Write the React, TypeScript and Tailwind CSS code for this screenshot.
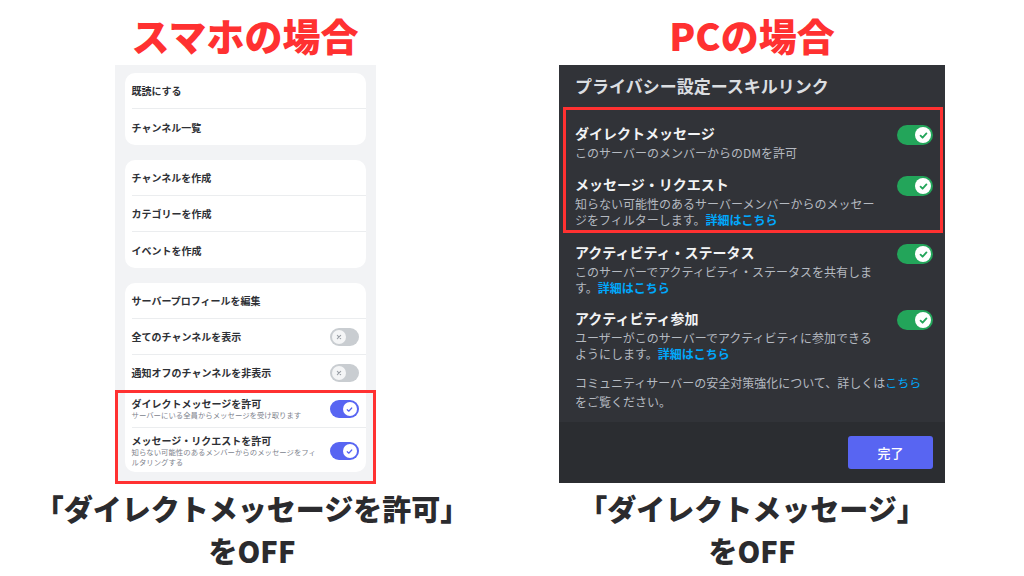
import React from 'react';

/* ── Toggles ──────────────────────────────── */
function PhoneToggle({ on }: { on: boolean }) {
  if (on) {
    return (
      <div className="w-[29px] h-[18px] rounded-full bg-[#5865f2] flex items-center justify-end px-[2px] shrink-0">
        <div className="w-[14px] h-[14px] rounded-full bg-white flex items-center justify-center">
          <svg width="9" height="9" viewBox="0 0 12 12" fill="none">
            <path d="M3 6.3l2 2 4-4.3" stroke="#5865f2" strokeWidth="1.6" strokeLinecap="round" strokeLinejoin="round" />
          </svg>
        </div>
      </div>
    );
  }
  return (
    <div className="w-[29px] h-[18px] rounded-full bg-[#c9cdd1] flex items-center px-[2px] shrink-0">
      <div className="w-[14px] h-[14px] rounded-full bg-[#f4f5f6] flex items-center justify-center">
        <svg width="8" height="8" viewBox="0 0 12 12" fill="none">
          <path d="M3.5 3.5l5 5M8.5 3.5l-5 5" stroke="#9a9fa6" strokeWidth="1.6" strokeLinecap="round" />
        </svg>
      </div>
    </div>
  );
}

function PcToggle() {
  return (
    <div className="w-[36px] h-[20px] rounded-full bg-[#23a55a] flex items-center justify-end px-[2px] shrink-0 mt-[2px]">
      <div className="w-[16px] h-[16px] rounded-full bg-white flex items-center justify-center">
        <svg width="11" height="11" viewBox="0 0 12 12" fill="none">
          <path d="M2.8 6.2l2.2 2.2 4.2-4.6" stroke="#23a55a" strokeWidth="2" strokeLinecap="round" strokeLinejoin="round" />
        </svg>
      </div>
    </div>
  );
}

/* ── Phone side ───────────────────────────── */
function Row({ label, toggle, last }: { label: string; toggle?: boolean; last?: boolean }) {
  return (
    <div className={`ml-[7px] pr-[7px] h-[36px] flex items-center justify-between ${last ? '' : 'border-b border-[#ebedef]'}`}>
      <span className="text-[10px] font-semibold text-[#2e3035]">{label}</span>
      {toggle !== undefined && <PhoneToggle on={toggle} />}
    </div>
  );
}

function PhonePanel() {
  return (
    <div className="relative w-[261px] h-[418px] bg-[#f2f3f5] px-[10px] pt-[8px] flex flex-col gap-[15px]">
      <div className="bg-white rounded-[10px]">
        <Row label="既読にする" />
        <Row label="チャンネル一覧" last />
      </div>
      <div className="bg-white rounded-[10px]">
        <Row label="チャンネルを作成" />
        <Row label="カテゴリーを作成" />
        <Row label="イベントを作成" last />
      </div>
      <div className="bg-white rounded-[10px]">
        <Row label="サーバープロフィールを編集" />
        <Row label="全てのチャンネルを表示" toggle={false} />
        <Row label="通知オフのチャンネルを非表示" toggle={false} />
        <div className="ml-[7px] pr-[7px] pt-[7px] pb-[7px] flex items-center justify-between border-b border-[#ebedef]">
          <div>
            <p className="text-[10px] leading-[12px] font-semibold text-[#2e3035]">ダイレクトメッセージを許可</p>
            <p className="text-[7.4px] leading-[10px] text-[#80848e]">サーバーにいる全員からメッセージを受け取ります</p>
          </div>
          <PhoneToggle on />
        </div>
        <div className="ml-[7px] pr-[7px] pt-[7px] pb-[5px] flex items-center justify-between">
          <div>
            <p className="text-[10px] leading-[12px] font-semibold text-[#2e3035]">メッセージ・リクエストを許可</p>
            <p className="text-[7.4px] leading-[10px] text-[#80848e]">
              知らない可能性のあるメンバーからのメッセージをフィ
              <br />
              ルタリングする
            </p>
          </div>
          <PhoneToggle on />
        </div>
      </div>
      {/* annotation box */}
      <div className="absolute left-0 right-0 top-[325px] bottom-[-1px] border-[3px] border-[#ff3131] pointer-events-none" />
    </div>
  );
}

/* ── PC side ──────────────────────────────── */
function Link({ children }: { children: React.ReactNode }) {
  return <span className="text-[#00a8fc] font-semibold">{children}</span>;
}

function PcRow({ title, children }: { title: string; children: React.ReactNode }) {
  return (
    <div className="flex items-start justify-between">
      <div className="w-[306px]">
        <p className="text-[14px] leading-[20px] font-semibold text-[#f2f3f5]">{title}</p>
        <p className="mt-[2px] text-[12px] leading-[16px] text-[#b5bac1]">{children}</p>
      </div>
      <PcToggle />
    </div>
  );
}

function PcPanel() {
  return (
    <div className="w-[386px] h-[418px] bg-[#313338] flex flex-col">
      <div className="h-[42px] px-[16px] flex items-center text-[17px] font-semibold text-[#dbdee1]">
        プライバシー設定ースキルリンク
      </div>
      <div className="ml-[4px] mr-[2px] border-[3px] border-[#ff3131] pl-[9px] pr-[7px] pt-[13px] pb-[2px] flex flex-col gap-[13px]">
        <PcRow title="ダイレクトメッセージ">このサーバーのメンバーからのDMを許可</PcRow>
        <PcRow title="メッセージ・リクエスト">
          知らない可能性のあるサーバーメンバーからのメッセー
          <br />
          ジをフィルターします。<Link>詳細はこちら</Link>
        </PcRow>
      </div>
      <div className="flex-1 pl-[16px] pr-[12px] pt-[9px] flex flex-col gap-[12px]">
        <PcRow title="アクティビティ・ステータス">
          このサーバーでアクティビティ・ステータスを共有しま
          <br />
          す。<Link>詳細はこちら</Link>
        </PcRow>
        <PcRow title="アクティビティ参加">
          ユーザーがこのサーバーでアクティビティに参加できる
          <br />
          ようにします。<Link>詳細はこちら</Link>
        </PcRow>
        <p className="mt-[-1px] text-[12px] leading-[19px] text-[#b5bac1]">
          コミュニティサーバーの安全対策強化について、詳しくは<span className="text-[#00a8fc]">こちら</span>
          <br />
          をご覧ください。
        </p>
      </div>
      <div className="h-[61px] bg-[#2b2d31] flex items-center justify-end pr-[12px]">
        <button className="w-[85px] h-[33px] rounded-[3px] bg-[#5865f2] text-white text-[13px] font-medium">
          完了
        </button>
      </div>
    </div>
  );
}

/* ── Page ─────────────────────────────────── */
export default function App() {
  return (
    <div className="w-[1024px] h-[576px] bg-white flex font-['Noto_Sans_CJK_JP','Noto_Sans',sans-serif] overflow-hidden">
      <div className="w-[490px] flex flex-col items-center pt-[12px]">
        <h1 className="h-[45px] text-[38px] leading-[45px] font-black text-[#ff3131]">スマホの場合</h1>
        <div className="mt-[8px]">
          <PhonePanel />
        </div>
        <p className="mt-[4px] pl-[14px] text-center text-[29px] leading-[42px] font-black text-[#2b2b2e]">
          「ダイレクトメッセージを許可」
          <br />
          をOFF
        </p>
      </div>
      <div className="w-[524px] flex flex-col items-center pt-[12px]">
        <h1 className="h-[45px] text-[38px] leading-[45px] font-black text-[#ff3131]">PCの場合</h1>
        <div className="mt-[8px]">
          <PcPanel />
        </div>
        <p className="mt-[4px] text-center text-[29px] leading-[42px] font-black text-[#2b2b2e]">
          「ダイレクトメッセージ」
          <br />
          をOFF
        </p>
      </div>
    </div>
  );
}
